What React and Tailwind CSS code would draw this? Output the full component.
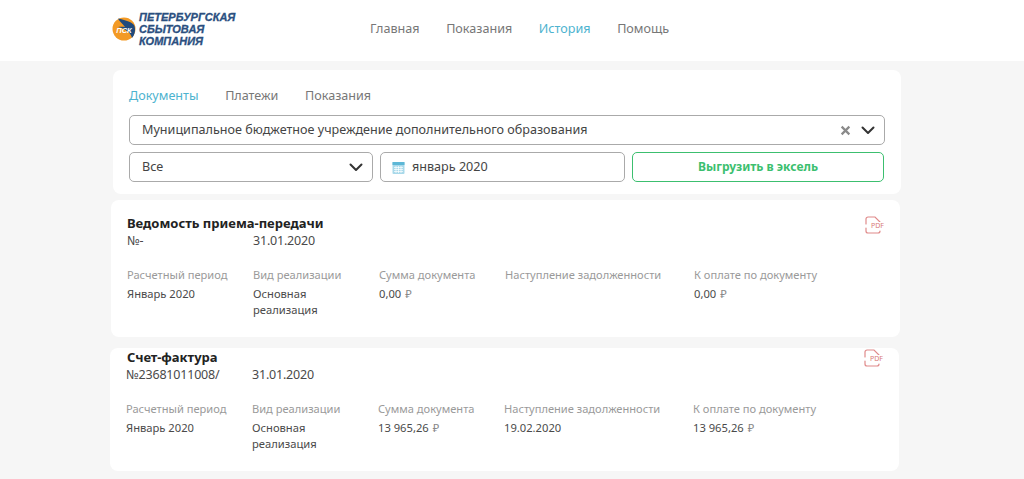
import React from "react";

const font = { fontFamily: '"Noto Sans", sans-serif' };

function Chevron({ className }) {
  return (
    <svg className={className} width="14" height="9" viewBox="0 0 14 9" fill="none">
      <path d="M1.5 1.5 7 7l5.5-5.5" stroke="#333" strokeWidth="2" strokeLinecap="round" strokeLinejoin="round" />
    </svg>
  );
}

function Logo() {
  return (
    <svg width="24" height="24" viewBox="0 0 24 24" className="shrink-0">
      <circle cx="12" cy="12" r="11.5" fill="#f39a25" />
      <path d="M6 1.5C13 3 20 5 22 8c2 4 1 10-2 13-1-5-6-9-14-11 2-.5 5-.5 7 0C11 7 8 5 6 1.5Z" fill="#1f4a7d" />
      <text x="12" y="15.5" textAnchor="middle" fontSize="7.5" fontWeight="700" fontStyle="italic" fill="#fff" fontFamily="Liberation Sans, sans-serif">ПСК</text>
    </svg>
  );
}

function PdfIcon() {
  return (
    <div className="relative w-[18px] h-[18px]">
      <svg width="18" height="18" viewBox="0 0 18 18" fill="none" className="absolute inset-0">
        <path d="M1 8V3a2 2 0 0 1 2-2h7l5 5v2M1 12v3a2 2 0 0 0 2 2h10a2 2 0 0 0 2-2" stroke="#e08a8a" strokeWidth="1.2" strokeLinecap="round" />
      </svg>
      <span className="absolute left-[6px] top-[6px] text-[7px] leading-[8px] text-[#d97a7a] bg-white">PDF</span>
    </div>
  );
}

function Field({ label, value, rub, className }) {
  return (
    <div className={className}>
      <div className="text-[11.1px] leading-[16px] text-[#9a9a9a] whitespace-nowrap">{label}</div>
      <div className="mt-[3px] text-[11.2px] leading-[16px] text-[#4a4a4a]">
        {value}
        {rub && <span className="ml-1 text-[#888]">₽</span>}
      </div>
    </div>
  );
}

function DocCard({ title, num, date, values, className, headClass, titleClass }) {
  return (
    <div className={`bg-white rounded-lg pl-4 pr-[17px] w-[789px] relative ${className}`}>
      <div className={`absolute right-[17px] ${headClass}`}>
        <PdfIcon />
      </div>
      <div className={`text-[13px] leading-[17px] font-bold text-[#222] ${titleClass}`}>{title}</div>
      <div className="mt-px flex text-[12.5px] leading-[16px] tracking-[-0.2px] text-[#4a4a4a]">
        <div className="w-[126px]">{num}</div>
        <div>{date}</div>
      </div>
      <div className="flex mt-[18px]">
        <Field className="w-[126px]" label="Расчетный период" value="Январь 2020" />
        <Field className="w-[126px] pr-8" label="Вид реализации" value="Основная реализация" />
        <Field className="w-[126px]" label="Сумма документа" value={values[0]} rub />
        <Field className="w-[189px]" label="Наступление задолженности" value={values[1]} />
        <Field label="К оплате по документу" value={values[2]} rub />
      </div>
    </div>
  );
}

export default function App() {
  return (
    <div style={font} className="min-h-[479px] bg-[#f6f6f6] overflow-hidden">
      <header className="h-[61px] bg-white flex items-center pl-[112px] pb-1">
        <Logo />
        <div className="ml-[3px] w-[130px] text-[11px] leading-[12px] font-bold italic text-[#2b4f80] [-webkit-text-stroke:0.3px_#2b4f80]" style={{ fontFamily: '"Liberation Sans", sans-serif' }}>
          ПЕТЕРБУРГСКАЯ
          <br />
          СБЫТОВАЯ
          <br />
          КОМПАНИЯ
        </div>
        <nav className="ml-[101px] pt-[2px] flex gap-[26.6px] text-[12.6px] text-[#777]">
          <span>Главная</span>
          <span>Показания</span>
          <span className="text-[#4db3cf]">История</span>
          <span>Помощь</span>
        </nav>
      </header>

      <section className="ml-[113px] mt-[9px] w-[788px] h-[124px] bg-white rounded-lg px-4 pt-[17px]">
        <div className="flex gap-[26.6px] text-[12.6px] leading-[18px] text-[#777]">
          <span className="text-[#4db3cf]">Документы</span>
          <span>Платежи</span>
          <span>Показания</span>
        </div>
        <div className="mt-[10px] h-[30px] border border-[#aaa] rounded-[5px] flex items-center pl-3 pr-[9px] text-[12.6px] text-[#444]">
          <span className="flex-1">Муниципальное бюджетное учреждение дополнительного образования</span>
          <svg width="11" height="11" viewBox="0 0 10 10" className="mr-[10px]">
            <path d="M1.5 1.5l7 7m0-7l-7 7" stroke="#8a8a8a" strokeWidth="2" />
          </svg>
          <Chevron />
        </div>
        <div className="mt-[7px] flex gap-[7px]">
          <div className="w-[244px] h-[30px] border border-[#aaa] rounded-[5px] flex items-center justify-between pl-3 pr-[9px] text-[12.6px] text-[#444]">
            <span>Все</span>
            <Chevron />
          </div>
          <div className="w-[245px] h-[30px] border border-[#aaa] rounded-[5px] flex items-center pl-[11px] text-[12.6px] text-[#444]">
            <svg width="13" height="13" viewBox="0 0 13 13" className="mr-[7px]">
              <rect x="0.5" y="1" width="12" height="12" rx="1" fill="#a9d9ea" />
              <rect x="0.5" y="1" width="12" height="3" fill="#5db7d6" />
              <path d="M2 6.5h9M2 8.5h9M2 10.5h9M4 5v7M6.5 5v7M9 5v7" stroke="#fff" strokeWidth="0.7" />
            </svg>
            январь 2020
          </div>
          <div className="w-[252px] h-[30px] border border-[#3cbf6f] rounded-[5px] flex items-center justify-center text-[12px] font-bold text-[#3cbf6f]">
            Выгрузить в эксель
          </div>
        </div>
      </section>

      <DocCard
        className="ml-[111px] mt-[6px] h-[137px] pt-[15px]"
        headClass="top-4"
        title="Ведомость приема-передачи"
        num="№-"
        date="31.01.2020"
        values={["0,00", "", "0,00"]}
      />
      <DocCard
        className="ml-[110px] mt-[11px] h-[123px] pt-[1px]"
        headClass="top-[1px]"
        titleClass="pl-px"
        title="Счет-фактура"
        num="№23681011008/"
        date="31.01.2020"
        values={["13 965,26", "19.02.2020", "13 965,26"]}
      />
    </div>
  );
}
